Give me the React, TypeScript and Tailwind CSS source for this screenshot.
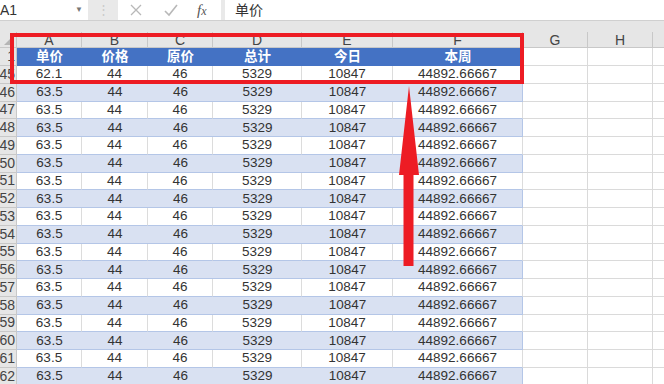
import React from "react";

const cols = [
  { key: "A", w: 65, head: "单价" },
  { key: "B", w: 66, head: "价格" },
  { key: "C", w: 65, head: "原价" },
  { key: "D", w: 89, head: "总计" },
  { key: "E", w: 91, head: "今日" },
  { key: "F", w: 130, head: "本周" },
];

const extra = [
  { key: "G", w: 65, label: "G" },
  { key: "H", w: 65, label: "H" },
  { key: "I", w: 40, label: "" },
];

const rowNums = Array.from({ length: 18 }, (_, i) => 45 + i);

function RowHead({ label }: { label: string | number }) {
  return (
    <div className="w-[17px] shrink-0 h-full bg-[#e6e6e6] border-r border-b border-[#c8c8c8] flex items-center justify-end overflow-hidden pr-[1px] text-[14px] text-[#444]">
      <span className="whitespace-nowrap">{label}</span>
    </div>
  );
}

function ExtraCells() {
  return (
    <>
      {extra.map((c) => (
        <div
          key={c.key}
          style={{ width: c.w }}
          className="shrink-0 h-full bg-white border-r border-b border-[#dadada]"
        />
      ))}
    </>
  );
}

export default function App() {
  return (
    <div
      className="relative w-[664px] h-[384px] overflow-hidden bg-[#e6e6e6] text-[#333]"
      style={{ fontFamily: '"Liberation Sans", Arial, "Noto Sans CJK SC", sans-serif' }}
    >
      {/* formula bar */}
      <div className="flex h-[21px] border-b border-[#d0d0d0] bg-[#e9e9e9]">
        <div className="w-[88px] h-[20px] bg-white flex items-center justify-between pr-[5px] text-[14px] text-[#333]">
          <span>A1</span>
          <span className="text-[8px] text-[#777]">▼</span>
        </div>
        <div className="w-[30px] flex items-center justify-center text-[#cacaca] text-[13px]">⋮</div>
        <div className="w-[103px] h-[20px] bg-white flex items-center">
          <svg width="14" height="14" viewBox="0 0 14 14" className="ml-[11px]">
            <path d="M2 2 L12 12 M12 2 L2 12" stroke="#b8b8b8" strokeWidth="1.3" />
          </svg>
          <svg width="16" height="14" viewBox="0 0 16 14" className="ml-[20px]">
            <path d="M2 8 L6 12 L14 2" stroke="#b8b8b8" strokeWidth="1.6" fill="none" />
          </svg>
          <span
            className="ml-[18px] text-[15px] italic text-[#555]"
            style={{ fontFamily: '"Liberation Serif", "Times New Roman", serif' }}
          >
            f<span className="text-[12px]">x</span>
          </span>
        </div>
        <div className="w-[4px]" />
        <div className="flex-1 h-[20px] bg-white flex items-center pl-[10px] text-[14px] text-[#333]">
          单价
        </div>
      </div>

      <div className="h-[11px]" />

      {/* column headers */}
      <div className="flex h-[16px] text-[14px] text-[#444]">
        <div className="w-[17px] shrink-0 h-full bg-[#e6e6e6] border-r border-b border-[#c8c8c8] relative">
          <svg width="9" height="9" viewBox="0 0 9 9" className="absolute left-[4px] bottom-[2px]">
            <path d="M9 0 L9 9 L0 9 Z" fill="#b5b5b5" />
          </svg>
        </div>
        {[...cols.map((c) => ({ key: c.key, w: c.w, label: c.key })), ...extra].map((c) => (
          <div
            key={c.key}
            style={{ width: c.w }}
            className="shrink-0 h-full flex items-center justify-center border-r border-b border-[#c8c8c8] leading-none"
          >
            {c.label}
          </div>
        ))}
      </div>

      {/* table header row */}
      <div className="flex h-[18px]">
        <RowHead label={1} />
        {cols.map((c) => (
          <div
            key={c.key}
            style={{ width: c.w }}
            className="shrink-0 h-full bg-[#4472c4] flex items-center justify-center text-white font-bold text-[13.5px]"
          >
            {c.head}
          </div>
        ))}
        <ExtraCells />
      </div>

      {rowNums.map((n, i) => {
        const band = i % 2 === 1;
        const vals = [i === 0 ? "62.1" : "63.5", "44", "46", "5329", "10847", "44892.66667"];
        return (
          <div key={n} className="flex h-[17.75px]">
            <RowHead label={n} />
            {cols.map((c, j) => (
              <div
                key={c.key}
                style={{ width: c.w }}
                className={
                  "shrink-0 h-full flex items-center justify-center text-[13.5px] text-[#333] border-b border-[#b4c6e7] " +
                  (band ? "bg-[#d9e1f2]" : "bg-white border-r border-r-[#dcdcdc]") +
                  (j === 5 ? " border-r border-r-[#b4c6e7]" : "")
                }
              >
                {vals[j]}
              </div>
            ))}
            <ExtraCells />
          </div>
        );
      })}

      {/* red highlight box */}
      <div className="absolute left-[10px] top-[33px] w-[514px] h-[51px] border-[4px] border-[#ed1c24]" />

      {/* red arrow */}
      <svg className="absolute left-0 top-0" width="664" height="384" viewBox="0 0 664 384">
        <polygon
          points="409,86 419,175 413.5,175 413.5,266 403.5,266 403.5,175 399,175"
          fill="#ed1c24"
        />
      </svg>
    </div>
  );
}
